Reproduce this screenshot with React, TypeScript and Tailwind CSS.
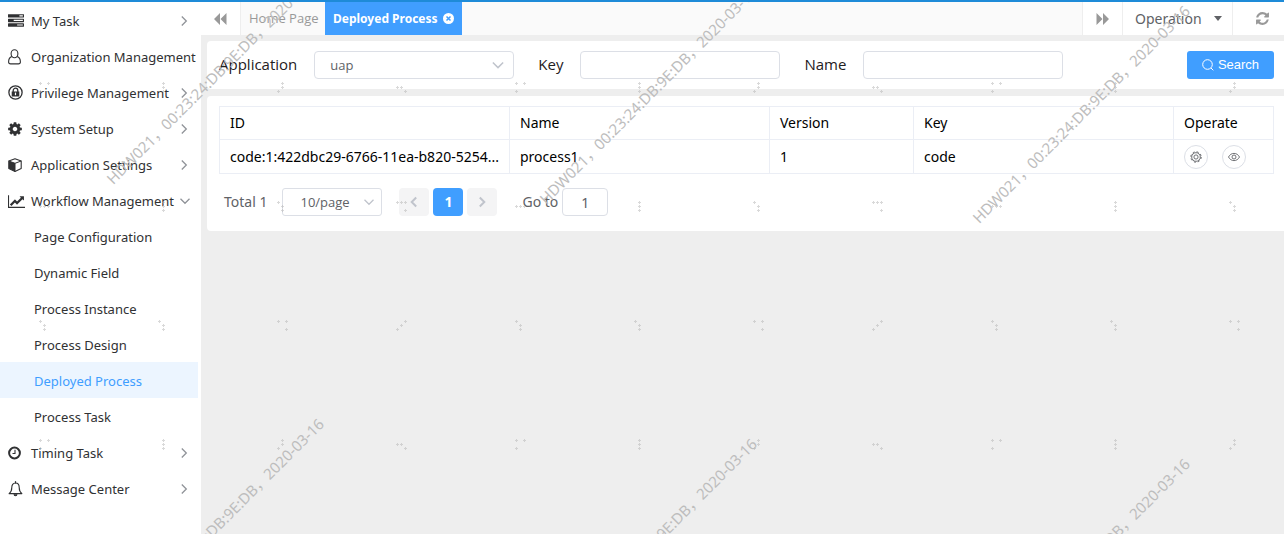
import React from "react";

type IconProps = { className?: string };

const TasksIcon = () => (
  <svg viewBox="0 0 1792 1792" className="h-4 w-4" fill="currentColor" aria-hidden="true">
    <path d="M1024 1408h640v-128h-640v128zm-384-512h1024v-128h-1024v128zm640-512h384v-128h-384v128zm512 832v256q0 26-19 45t-45 19h-1664q-26 0-45-19t-19-45v-256q0-26 19-45t45-19h1664q26 0 45 19t19 45zm0-512v256q0 26-19 45t-45 19h-1664q-26 0-45-19t-19-45v-256q0-26 19-45t45-19h1664q26 0 45 19t19 45zm0-512v256q0 26-19 45t-45 19h-1664q-26 0-45-19t-19-45v-256q0-26 19-45t45-19h1664q26 0 45 19t19 45z" />
  </svg>
);

const UserIcon = () => (
  <svg viewBox="0 0 14 16" className="h-4 w-3.5" fill="none" stroke="currentColor" strokeWidth="1.1" aria-hidden="true">
    <ellipse cx="6.5" cy="4.8" rx="3.4" ry="4" />
    <path d="M3.9 7.6C1.6 8.4.6 10.4.6 13c0 1.200.8 1.900 2 1.900h7.800c1.200 0 2-.7 2-1.900 0-2.600-1-4.600-3.300-5.400" />
  </svg>
);

const LockIcon = () => (
  <svg viewBox="0 0 16 16" className="h-4 w-4" fill="none" stroke="currentColor" aria-hidden="true">
    <circle cx="7.500" cy="7.500" r="6.600" strokeWidth="1.300" />
    <path d="M5.200 7V5.500a2.300 2.300 0 0 1 4.600 0V7" strokeWidth="1.300" />
    <path d="M3.700 6.500h7.600v5H3.700z" fill="currentColor" stroke="none" />
    <path d="M7.500 7.600v2.600" stroke="#fff" strokeWidth="1.200" />
  </svg>
);

const CogIcon = () => (
  <svg viewBox="0 0 1792 1792" className="-ml-px h-4 w-4" fill="currentColor" aria-hidden="true">
    <path d="M1152 896q0-106-75-181t-181-75-181 75-75 181 75 181 181 75 181-75 75-181zm512-109v222q0 12-8 23t-20 13l-185 28q-19 54-39 91 35 50 107 138 10 12 10 25t-9 23q-27 37-99 108t-94 71q-12 0-26-9l-138-108q-44 23-91 38-16 136-29 186-7 28-36 28h-222q-14 0-24.500-8.500t-11.500-21.500l-28-184q-49-16-90-37l-141 107q-10 9-25 9-14 0-25-11-126-114-165-168-7-10-7-23 0-12 8-23 15-21 51-66.500t54-70.500q-27-50-41-99l-183-27q-13-2-21-12.500t-8-23.500v-222q0-12 8-23t19-13l186-28q14-46 39-92-40-57-107-138-10-12-10-24 0-10 9-23 26-36 98.500-107.500t94.500-71.500q13 0 26 10l138 107q44-23 91-38 16-136 29-186 7-28 36-28h222q14 0 24.500 8.500t11.500 21.500l28 184q49 16 90 37l142-107q9-9 24-9 13 0 25 10 129 119 165 170 7 8 7 22 0 12-8 23-15 21-51 66.500t-54 70.500q26 50 41 98l183 28q13 2 21 12.500t8 23.500z" />
  </svg>
);

const CubeIcon = () => (
  <svg viewBox="0 0 14 14" className="h-3.5 w-3.5" aria-hidden="true">
    <path d="M7 .7 13.200 3v7.600L7 13.400.8 10.600V3z" fill="#fff" stroke="currentColor" strokeWidth="1.100" strokeLinejoin="round" />
    <path d="M.8 3 7 5.300v8.100L.8 10.600z" fill="currentColor" />
    <path d="M.8 3 7 5.300 13.200 3M7 5.300v8" fill="none" stroke="currentColor" strokeWidth="1" />
  </svg>
);

const ChartIcon = () => (
  <svg viewBox="0 0 2048 1792" className="h-[15px] w-[17px]" fill="currentColor" aria-hidden="true">
    <path d="M2048 1536v128h-2048v-1536h128v1408h1920zm-128-1248v435q0 21-19.500 29.500t-35.500-7.500l-121-121-633 633q-10 10-23 10t-23-10l-233-233-416 416-192-192 585-585q10-10 23-10t23 10l233 233 464-464-121-121q-16-16-7.500-35.500t29.500-19.500h435q14 0 23 9t9 23z" />
  </svg>
);

const ClockIcon = () => (
  <svg viewBox="0 0 14 14" className="h-3.5 w-3.5" fill="none" stroke="currentColor" aria-hidden="true">
    <circle cx="6.500" cy="7" r="5.400" strokeWidth="2" />
    <path d="M7 3.800v3.700H4.500" strokeWidth="1.100" />
  </svg>
);

const BellIcon = () => (
  <svg viewBox="0 0 15 16" className="h-4 w-[15px]" fill="none" stroke="currentColor" strokeWidth="1.100" aria-hidden="true">
    <path d="M7.500 2C4.900 2 3.800 4 3.800 6.500c0 3.300-1 4.800-2.700 6.100h12.800c-1.700-1.300-2.700-2.800-2.700-6.100C11.200 4 10.100 2 7.500 2z" strokeLinejoin="round" />
    <path d="M7.500 2V.6" strokeLinecap="round" />
    <path d="M6 13.200c.1 1 .7 1.600 1.500 1.600S8.900 14.200 9 13.200" fill="currentColor" />
  </svg>
);

const Chevron = ({ className = "" }: IconProps) => (
  <svg viewBox="0 0 14 14" className={className} fill="none" stroke="currentColor" strokeWidth="1.300" aria-hidden="true">
    <path d="M4.800 2.500 9.300 7l-4.500 4.500" />
  </svg>
);

const FastIcon = ({ className = "" }: IconProps) => (
  <svg viewBox="0 0 13 12" className={className} fill="currentColor" aria-hidden="true">
    <path d="M0 6 6 0v12zM6.500 6l6-6v12z" />
  </svg>
);

const RefreshIcon = () => (
  <svg viewBox="0 0 1536 1664" className="h-3.5 w-[13px]" fill="currentColor" aria-hidden="true">
    <path d="M1511 928q0 5-1 7-64 268-268 434.500t-478 166.500q-146 0-282.500-55t-243.500-157l-129 129q-19 19-45 19t-45-19-19-45v-448q0-26 19-45t45-19h448q26 0 45 19t19 45-19 45l-137 137q71 66 161 102t187 36q134 0 250-65t186-179q11-17 53-117 8-23 30-23h192q13 0 22.500 9.500t9.500 22.500zm25-800v448q0 26-19 45t-45 19h-448q-26 0-45-19t-19-45 19-45l138-138q-148-137-349-137-134 0-250 65t-186 179q-11 17-53 117-8 23-30 23h-199q-13 0-22.500-9.500t-9.500-22.500v-7q65-268 270-434.500t480-166.500q146 0 284 55.500t245 156.500l130-129q19-19 45-19t45 19 19 45z" />
  </svg>
);

type Item = { label: string; icon: React.ReactNode; open?: boolean };

const before: Item[] = [
  { label: "My Task", icon: <TasksIcon /> },
  { label: "Organization Management", icon: <UserIcon /> },
  { label: "Privilege Management", icon: <LockIcon /> },
  { label: "System Setup", icon: <CogIcon /> },
  { label: "Application Settings", icon: <CubeIcon /> },
  { label: "Workflow Management", icon: <ChartIcon />, open: true },
];
const children = ["Page Configuration", "Dynamic Field", "Process Instance", "Process Design", "Deployed Process", "Process Task"];
const after: Item[] = [
  { label: "Timing Task", icon: <ClockIcon /> },
  { label: "Message Center", icon: <BellIcon /> },
];

const MenuRow = ({ label, icon, open }: Item) => (
  <button type="button" aria-expanded={!!open} className="flex h-9 w-full items-center overflow-hidden pt-0.5 pr-[7px] pl-2 text-left">
    <span className="flex w-[23px] shrink-0 items-center">{icon}</span>
    <span className="mr-1 shrink-0 whitespace-nowrap">{label}</span>
    <Chevron className={open ? "ml-auto h-3.5 w-3.5 shrink-0 rotate-90 text-[#909399]" : "ml-auto h-3.5 w-3.5 shrink-0 text-[#909399]"} />
  </button>
);

/* Dot marks: each cell of the grid holds a small 3x3 code, four codes repeat per row. */
const codes: Record<string, number[][]> = {
  a: [[0, 0], [1, 1], [1, 2]],
  b: [[0, 0], [2, 0], [2, 2]],
  c: [[2, 0], [1, 1], [0, 2]],
  d: [[1, 0], [1, 1], [1, 2]],
  e: [[1, 0], [1, 1], [0, 2]],
  f: [[0, 1], [1, 1], [2, 2]],
  g: [[0, 1], [1, 1], [2, 1]],
  h: [[0, 0], [1, 0], [2, 0], [2, 2]],
  i: [[0, 0], [2, 0], [0, 2]],
};
const dotRows = ["idef", "gdah", "aabc"];
const plus = (x: number, y: number) => `M${x - 1} ${y}h3v1h-3zM${x} ${y - 1}h1v3h-1z`;
const dotPath = dotRows
  .flatMap((row, r) => [...row].flatMap((k, c) => codes[k].map(([x, y]) => plus(2 + c * 119 + x * 4, 2 + r * 119 + y * 4))))
  .join("");

const marks = [
  "left-[116px] top-[166px]",
  "left-[549px] top-[186px]",
  "left-[982px] top-[205px]",
  "left-[116px] top-[618px]",
  "left-[549px] top-[638px]",
  "left-[982px] top-[658px]",
];

const Watermark = () => (
  <div aria-hidden="true" className="pointer-events-none absolute inset-0 overflow-hidden">
    <svg className="absolute inset-0 h-full w-full">
      <defs>
        <pattern id="dots" x="38" y="79" width="476" height="357" patternUnits="userSpaceOnUse">
          <path d={dotPath} fill="#b4b4b4" fillOpacity="0.5" shapeRendering="crispEdges" />
        </pattern>
      </defs>
      <rect y="78" width="100%" height="100%" fill="url(#dots)" />
    </svg>
    {marks.map((pos) => (
      <div
        key={pos}
        className={`absolute ${pos} origin-bottom-left -rotate-45 font-['Noto_Sans','Noto_Sans_CJK_SC',sans-serif] text-[15px] leading-5 whitespace-nowrap text-[#bdbdbd]`}
      >
        HDW021，00:23:24:DB:9E:DB，2020-03-16
      </div>
    ))}
  </div>
);

const field = "h-7 w-[200px] rounded border border-[#dcdfe6] bg-white text-[13px] text-[#606266] outline-none";
const cell = "border border-[#ebeef5] px-2.5 py-0 text-left font-normal truncate";

export default function App() {
  return (
    <div className="relative flex min-h-screen flex-col overflow-hidden border-t-2 border-[#1e8bd8] bg-white font-['Noto_Sans','Noto_Sans_CJK_SC',sans-serif] text-sm text-[#303133]">
      <div className="flex flex-1">
        <aside className="w-[201px] shrink-0 pr-[3px]">
          <nav className="text-[13px]">
            {before.map((m) => <MenuRow key={m.label} {...m} />)}
            {children.map((c) => (
              <a
                key={c}
                href="#"
                className={c === "Deployed Process" ? "flex h-9 items-center bg-[#ecf5ff] pt-0.5 pl-[34px] text-[#409eff]" : "flex h-9 items-center pt-0.5 pl-[34px]"}
              >
                {c}
              </a>
            ))}
            {after.map((m) => <MenuRow key={m.label} {...m} />)}
          </nav>
        </aside>

        <main className="min-w-0 flex-1 bg-[#eee]">
          <div className="flex h-[33px] bg-[#fafafa] text-[#999]">
            <button type="button" aria-label="Previous tabs" className="flex w-10 items-center justify-center border-r border-[#eee] bg-white">
              <FastIcon className="h-3 w-[13px]" />
            </button>
            <a href="#" className="flex w-[84px] items-center pl-2 font-['Open_Sans','Noto_Sans',sans-serif] text-[13px] whitespace-nowrap">Home Page</a>
            <div className="flex w-[137px] items-center justify-between bg-[#409eff] px-2 text-xs font-bold whitespace-nowrap text-white">
              Deployed Process
              <button type="button" aria-label="Close tab">
                <svg viewBox="0 0 11 11" className="h-[11px] w-[11px]" aria-hidden="true">
                  <circle cx="5.500" cy="5.500" r="5.500" fill="#fff" />
                  <path d="m3.500 3.500 4 4m0-4-4 4" stroke="#409eff" strokeWidth="1.500" />
                </svg>
              </button>
            </div>
            <button type="button" aria-label="Next tabs" className="ml-auto flex w-[41px] items-center justify-center border-x border-[#eee] bg-white">
              <FastIcon className="h-3 w-[13px] rotate-180" />
            </button>
            <button type="button" className="flex w-[110px] items-center gap-3 border-r border-[#eee] bg-white pl-3 text-[#606266]">
              Operation
              <svg viewBox="0 0 8 5" className="h-[5px] w-2" fill="currentColor" aria-hidden="true"><path d="M0 0h8L4 5z" /></svg>
            </button>
            <button type="button" aria-label="Refresh" className="flex w-[51px] items-center justify-end bg-white pr-[15px]">
              <RefreshIcon />
            </button>
          </div>

          <div className="flex flex-col gap-[7px] pt-1.5 pl-1.5">
            <form className="flex h-12 items-center rounded-l bg-white pr-2.5 pl-3 font-['Open_Sans','Noto_Sans',sans-serif] text-[15px] text-[#1f2022]">
              <label htmlFor="app" className="mr-[17px]">Application</label>
              <div className="relative mr-6">
                <select id="app" defaultValue="uap" className={`${field} block appearance-none pl-[15px]`}>
                  <option>uap</option>
                </select>
                <Chevron className="pointer-events-none absolute top-1.5 right-2 h-4 w-4 rotate-90 text-[#c0c4cc]" />
              </div>
              <label htmlFor="key" className="mr-[17px]">Key</label>
              <input id="key" type="text" className={`${field} mr-6 px-3`} />
              <label htmlFor="name" className="mr-[17px]">Name</label>
              <input id="name" type="text" className={`${field} px-3`} />
              <button type="button" className="ml-auto flex h-7 w-[87px] items-center justify-center gap-1 rounded-[3px] bg-[#409eff] font-['Liberation_Sans',sans-serif] text-[13px] text-white">
                <svg viewBox="0 0 12 12" className="h-3 w-3" fill="none" stroke="currentColor" aria-hidden="true">
                  <circle cx="5.500" cy="5.500" r="4.800" />
                  <path d="m9 9 2.300 2.300" />
                </svg>
                Search
              </button>
            </form>

            <section className="rounded-l bg-white pt-2.5 pr-2.5 pb-[15px] pl-3">
              <table className="w-full table-fixed border-collapse text-sm text-black">
                <colgroup>
                  <col className="w-[290px]" />
                  <col className="w-[260px]" />
                  <col className="w-[144px]" />
                  <col />
                  <col className="w-[100px]" />
                </colgroup>
                <thead>
                  <tr className="h-[33px]">
                    {["ID", "Name", "Version", "Key", "Operate"].map((h) => <th key={h} scope="col" className={cell}>{h}</th>)}
                  </tr>
                </thead>
                <tbody>
                  <tr className="h-[34px]">
                    <td className={cell}>code:1:422dbc29-6766-11ea-b820-5254...</td>
                    <td className={cell}>process1</td>
                    <td className={cell}>1</td>
                    <td className={cell}>code</td>
                    <td className={cell}>
                      <div className="flex gap-3.5">
                        <button type="button" aria-label="Configure" className="flex h-6 w-6 items-center justify-center rounded-full border border-[#dcdfe6] text-[#606266]">
                          <svg viewBox="0 0 12 12" className="h-3 w-3" fill="none" stroke="currentColor" strokeWidth="0.900" aria-hidden="true">
                            <circle cx="6" cy="6" r="4.300" />
                            <circle cx="6" cy="6" r="5.200" strokeWidth="1" strokeDasharray="2 2.084" />
                            <circle cx="6" cy="6" r="2.100" />
                          </svg>
                        </button>
                        <button type="button" aria-label="View" className="flex h-6 w-6 items-center justify-center rounded-full border border-[#dcdfe6] text-[#606266]">
                          <svg viewBox="0 0 12 12" className="h-3 w-3" fill="none" stroke="currentColor" strokeWidth="0.900" aria-hidden="true">
                            <path d="M.5 6C1.800 3.600 3.700 2.400 6 2.400S10.200 3.600 11.500 6C10.200 8.400 8.300 9.600 6 9.600S1.800 8.400.5 6z" />
                            <circle cx="6" cy="6" r="2" />
                          </svg>
                        </button>
                      </div>
                    </td>
                  </tr>
                </tbody>
              </table>

              <div className="mt-3.5 flex h-7 items-center pl-[5px] text-[#606266]">
                <span className="mr-[15px]">Total 1</span>
                <div className="relative mr-[17px]">
                  <select aria-label="Rows per page" defaultValue="10/page" className="block h-7 w-[100px] appearance-none rounded-[3px] border border-[#dcdfe6] bg-white pl-[17px] font-['Open_Sans','Noto_Sans',sans-serif] text-[13px] outline-none">
                    <option>10/page</option>
                  </select>
                  <Chevron className="pointer-events-none absolute top-[7px] right-1.5 h-3.5 w-3.5 rotate-90 text-[#c0c4cc]" />
                </div>
                <div className="flex gap-1">
                  <button type="button" aria-label="Previous page" disabled className="flex h-7 w-[30px] items-center justify-center rounded-sm bg-[#f4f4f5] text-[#c0c4cc]">
                    <Chevron className="h-3.5 w-3.5 rotate-180 stroke-2" />
                  </button>
                  <button type="button" aria-current="page" className="h-7 w-[30px] rounded-sm bg-[#409eff] font-bold text-white">1</button>
                  <button type="button" aria-label="Next page" disabled className="flex h-7 w-[30px] items-center justify-center rounded-sm bg-[#f4f4f5] text-[#c0c4cc]">
                    <Chevron className="h-3.5 w-3.5 stroke-2" />
                  </button>
                </div>
                <label htmlFor="goto" className="mr-1 ml-[25px]">Go to</label>
                <input id="goto" type="text" defaultValue="1" className="h-7 w-[46px] rounded border border-[#dcdfe6] text-center text-sm outline-none" />
              </div>
            </section>
          </div>
        </main>
      </div>
      <Watermark />
    </div>
  );
}
